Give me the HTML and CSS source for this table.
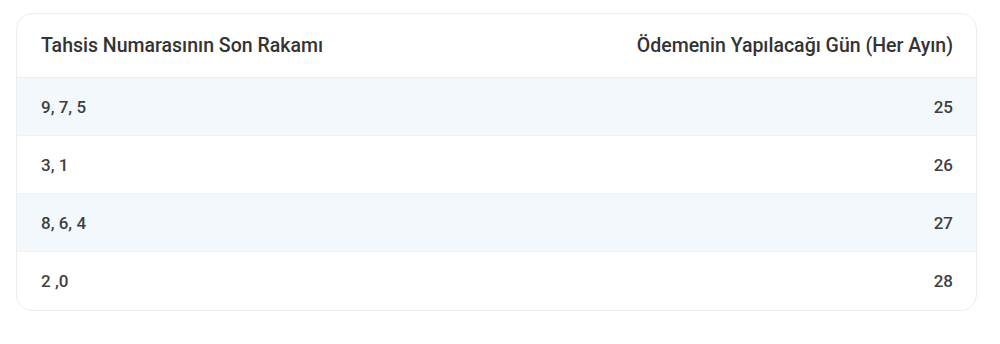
FILE: index.html
```html
<!DOCTYPE html>
<html lang="tr">
<head>
<meta charset="utf-8">
<link rel="stylesheet" href="styles.css">
</head>
<body>
<div class="card">
  <table class="tbl">
    <thead>
      <tr><th class="l">Tahsis Numarasının Son Rakamı</th><th class="r">Ödemenin Yapılacağı Gün (Her Ayın)</th></tr>
    </thead>
    <tbody>
      <tr class="alt"><td class="l">9, 7, 5</td><td class="r">25</td></tr>
      <tr><td class="l">3, 1</td><td class="r">26</td></tr>
      <tr class="alt"><td class="l">8, 6, 4</td><td class="r">27</td></tr>
      <tr class="last"><td class="l">2 ,0</td><td class="r">28</td></tr>
    </tbody>
  </table>
</div>
</body>
</html>
```

FILE: styles.css
```css
html, body { margin: 0; padding: 0; background: #fff; }
body {
  font-family: Roboto, "Noto Sans", sans-serif;
  color: #3a3a3a;
  padding: 13px 23px 0 16px;
}
.card {
  border: 1px solid #ededed;
  border-radius: 16px;
  overflow: hidden;
  background: #fff;
}
.tbl {
  width: 100%;
  border-collapse: collapse;
}
.tbl th {
  height: 63px;
  font-size: 19.5px;
  font-weight: 500;
  color: #333;
  border-bottom: 1px solid #e9eef1;
  padding: 0 23px 0 24px;
}
.tbl td {
  height: 57px;
  font-size: 17px;
  font-weight: 500;
  color: #3f3f3f;
  border-bottom: 1px solid #eef2f4;
  padding: 0 23px 0 24px;
}
.tbl tr.last td { border-bottom: none; height: 58px; }
.tbl tr.alt td { background: #f2f8fb; }
.l { text-align: left; }
.r { text-align: right; }
```
